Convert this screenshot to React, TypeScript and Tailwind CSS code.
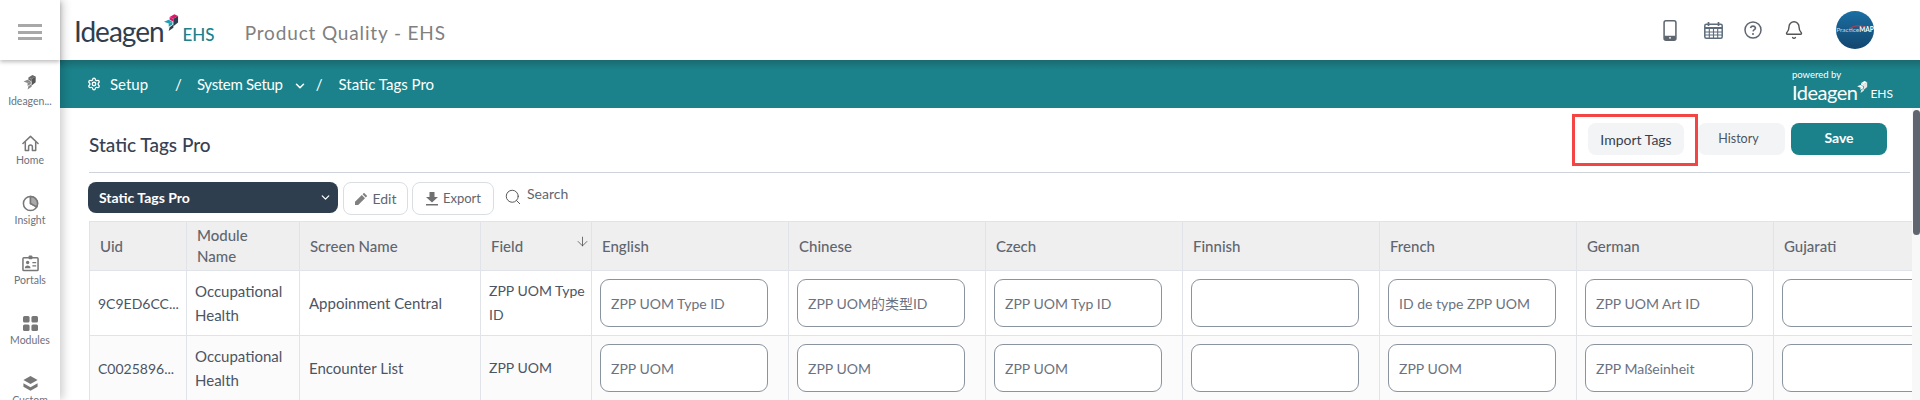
import React from "react";
import { ChevronDown, ArrowDown, Search, Settings, Bell } from "lucide-react";

const LANGS = ["English", "Chinese", "Czech", "Finnish", "French", "German", "Gujarati"];
const ROWS = [
  { uid: "9C9ED6CC...", mod: ["Occupational", "Health"], screen: "Appoinment Central", field: ["ZPP UOM Type", "ID"], vals: ["ZPP UOM Type ID", "ZPP UOM的类型ID", "ZPP UOM Typ ID", "", "ID de type ZPP UOM", "ZPP UOM Art ID", ""] },
  { uid: "C0025896...", mod: ["Occupational", "Health"], screen: "Encounter List", field: ["ZPP UOM"], vals: ["ZPP UOM", "ZPP UOM", "ZPP UOM", "", "ZPP UOM", "ZPP Maßeinheit", ""] },
];
const COLS = "grid grid-cols-[97px_113px_181px_111px_197px_197px_197px_197px_197px_197px_197px]";

function Mark({ a, b, c, d, className }: { a: string; b: string; c: string; d: string; className?: string }) {
  return (
    <svg viewBox="0 0 16 21" className={className}>
      <path d="M6 3l5-3 4 2-5 3z" fill={a} />
      <path d="M6 3l4 2v3L6 6z" fill={a} />
      <path d="M10 5l5-3v7l-5 4z" fill={c} />
      <path d="M0 8l5-2 4 2-4 2z" fill={b} />
      <path d="M5 10l4-2v3l-4 2.5z" fill={b} />
      <path d="M5 18l5-3.5V11L6 14z" fill={d} />
    </svg>
  );
}

const HomeIcon = () => (
  <svg viewBox="0 0 18 18" className="h-[17px] w-[17px]" fill="none" stroke="#777" strokeWidth="1.6" strokeLinejoin="round">
    <path d="M1 9l8-7.5L17 9" strokeLinecap="round" />
    <path d="M3.5 7.5V16.5h3.5v-4a2 2 0 014 0v4h3.5V7.5" />
  </svg>
);
const InsightIcon = () => (
  <svg viewBox="0 0 18 18" className="h-[17px] w-[17px]" fill="none" stroke="#777" strokeWidth="1.6">
    <circle cx="9" cy="9" r="7.5" />
    <path d="M9 1.5V9l6.5 3.5" />
    <path d="M9 1.5a7.5 7.5 0 016.5 11L9 9z" fill="#aaa" />
  </svg>
);
const PortalIcon = () => (
  <svg viewBox="0 0 18 18" className="h-[17px] w-[17px]">
    <rect x="1" y="3" width="16" height="13.5" rx="1" fill="none" stroke="#777" strokeWidth="1.6" />
    <rect x="7" y="0.5" width="4" height="4" rx="1" fill="#777" />
    <circle cx="6" cy="8" r="1.8" fill="#777" />
    <path d="M3 14a3 3 0 016 0z" fill="#777" />
    <path d="M11 8h4M11 11.5h4" stroke="#777" strokeWidth="1.4" />
  </svg>
);
const ModulesIcon = () => (
  <svg viewBox="0 0 16 16" className="h-[15px] w-[15px]" fill="#777">
    <rect x="0" y="0" width="7" height="7" rx="1.6" />
    <rect x="9" y="0" width="7" height="7" rx="1.6" />
    <rect x="0" y="9" width="7" height="7" rx="1.6" />
    <rect x="9" y="9" width="7" height="7" rx="1.6" />
  </svg>
);
const CustomIcon = () => (
  <svg viewBox="0 0 18 18" className="h-[17px] w-[17px]" fill="#777">
    <path d="M9 1l7.5 4.2L9 9.4 1.5 5.2z" />
    <path d="M1.5 8.8L9 13l7.5-4.2v3.6L9 16.8 1.5 12.4z" />
  </svg>
);
const NAV = [
  { label: "Home", Icon: HomeIcon },
  { label: "Insight", Icon: InsightIcon },
  { label: "Portals", Icon: PortalIcon },
  { label: "Modules", Icon: ModulesIcon },
  { label: "Custom", Icon: CustomIcon },
];

export default function App() {
  return (
    <div className="relative flex h-[400px] w-[1920px] overflow-hidden bg-white font-['Lato','Liberation_Sans',sans-serif] text-[#4b5563]">
      <aside className="z-20 flex w-[60px] shrink-0 flex-col items-center bg-white shadow-[3px_0_9px_rgba(0,0,0,0.2)]">
        <div className="flex h-[60px] w-full shrink-0 items-center justify-center pt-1 shadow-[0_2px_4px_rgba(0,0,0,0.25)]">
          <div className="flex w-6 flex-col gap-[3.5px]">
            <span className="h-[3px] bg-[#a8a8a8]" />
            <span className="h-[3px] bg-[#a8a8a8]" />
            <span className="h-[3px] bg-[#a8a8a8]" />
          </div>
        </div>
        <div className="flex h-[74px] w-full shrink-0 flex-col items-center pt-[15px]">
          <Mark a="#6a6a6a" b="#888" c="#555" d="#888" className="h-[17px] w-[14px]" />
          <span className="mt-[3px] text-[10.5px] leading-[12px] text-[#6b7280]">Ideagen...</span>
        </div>
        {NAV.map(({ label, Icon }) => (
          <div key={label} className="flex h-[60px] w-full shrink-0 flex-col items-center">
            <div className="flex h-[18px] items-center"><Icon /></div>
            <span className="mt-[2px] text-[10.5px] leading-[12px] text-[#6b7280]">{label}</span>
          </div>
        ))}
      </aside>

      <div className="flex min-w-0 flex-1 flex-col">
        <header className="flex h-[60px] shrink-0 items-center">
          <div className="ml-[14px] mt-[2px] flex items-center">
            <span className="text-[28px] leading-none tracking-[-1px] text-[#2f3e4e]">Ideagen</span>
            <Mark a="#e0186c" b="#1f9fb5" c="#2f3e4e" d="#2f3e4e" className="mb-[14px] h-[20px] w-[15px]" />
            <span className="ml-[4px] mt-[7px] text-[17px] font-medium leading-none text-[#1b828b]">EHS</span>
          </div>
          <span className="ml-[30px] mt-[6px] text-[19px] tracking-[0.85px] text-[#808080]">Product Quality - EHS</span>
          <div className="ml-auto flex items-center text-[#5f6670]">
            <svg viewBox="0 0 14 22" className="h-[21px] w-[14px]">
              <rect x="0.8" y="0.8" width="12.4" height="20.4" rx="2" fill="none" stroke="#5f6670" strokeWidth="1.6" />
              <path d="M1 16.5h12V19a2 2 0 01-2 2H3a2 2 0 01-2-2z" fill="#5f6670" />
              <circle cx="7" cy="18.7" r="1" fill="#fff" />
            </svg>
            <svg viewBox="0 0 19 17" className="ml-[27px] h-[17px] w-[19px]" fill="none" stroke="#5d6b7c">
              <rect x="0.8" y="2.2" width="17.4" height="14" rx="1.5" strokeWidth="1.5" />
              <path d="M4.5 0v4M14.5 0v4" strokeWidth="1.7" />
              <path d="M1 6h17" strokeWidth="2" />
              <path d="M1 10h17M1 13h17M5.3 6v10M9.5 6v10M13.7 6v10" strokeWidth="1.1" />
            </svg>
            <svg viewBox="0 0 18 18" className="ml-[21px] h-[18px] w-[18px]" fill="none" stroke="#5f6670">
              <circle cx="9" cy="9" r="8" strokeWidth="1.5" />
              <path d="M6.5 7a2.6 2.6 0 015 0c0 1.6-2.3 1.8-2.4 3.4" strokeWidth="1.6" />
              <circle cx="9" cy="13" r="1" fill="#5f6670" stroke="none" />
            </svg>
            <Bell size={20} strokeWidth={1.7} className="ml-[22px] text-[#555]" />
            <div className="relative ml-[32px] mr-[46px] flex h-[38px] w-[38px] items-center justify-center rounded-full bg-gradient-to-b from-[#1b6fa3] to-[#12466f] text-[6.5px] font-bold text-white">
              <span className="font-normal text-[#c9d6e2]">Practice</span>MAP
              <svg viewBox="0 0 20 5" className="absolute left-[13px] top-[14px] w-[18px]" fill="none" stroke="#d33a45" strokeWidth="1">
                <path d="M0 4C7 0 14 0 20 3" />
              </svg>
            </div>
          </div>
        </header>

        <nav className="flex h-[48px] shrink-0 items-center bg-gradient-to-b from-[#1a6a70] via-[#1b828b] via-20% to-[#1b828b] pl-[27px] pr-[27px] text-[15px] text-white">
          <Settings size={14} strokeWidth={2.2} />
          <span className="ml-[9px]">Setup</span>
          <span className="ml-[27px]">/</span>
          <span className="ml-[15px] tracking-[-0.3px]">System Setup</span>
          <ChevronDown size={14} strokeWidth={2.6} className="ml-[10px] mt-[3px]" />
          <span className="ml-[9px]">/</span>
          <span className="ml-[16px]">Static Tags Pro</span>
          <div className="ml-auto flex flex-col pt-[4px]">
            <span className="text-[9.5px] leading-[12px]">powered by</span>
            <div className="flex items-center">
              <span className="text-[20px] leading-[22px] tracking-[-0.5px]">Ideagen</span>
              <Mark a="#fff" b="#fff" c="#e5e5e5" d="#e5e5e5" className="mb-2 h-[14px] w-[11px]" />
              <span className="ml-[2px] mt-[3px] text-[12px] leading-none">EHS</span>
            </div>
          </div>
        </nav>

        <main className="min-h-0 flex-1 pl-[29px] pr-[10px]">
          <div className="flex h-[65px] items-center justify-between border-b border-[#cfd4da]">
            <h1 className="pt-[11px] text-[19px] font-medium text-[#374151]">Static Tags Pro</h1>
            <div className="mb-[2px] mr-[23px] flex items-center">
              <button className="h-8 w-24 rounded-lg bg-[#f3f4f6] text-[14px] text-[#374151]">Import Tags</button>
              <button className="ml-[14px] h-8 w-[87px] rounded-lg bg-[#f3f4f6] pr-[6px] text-[12.5px] text-[#4b5563]">History</button>
              <button className="ml-[6px] h-8 w-24 rounded-lg bg-[#1b828b] pb-1 text-[14px] font-bold text-white">Save</button>
            </div>
          </div>

          <div className="mt-[9px] flex h-[32px] items-start">
            <div className="ml-[-1px] flex h-[31px] w-[250px] items-center justify-between rounded-lg bg-[#2f3e4e] pl-[11px] pr-[6px] text-[14px] font-bold text-white">
              Static Tags Pro
              <ChevronDown size={13} strokeWidth={2.4} />
            </div>
            <button className="ml-[5px] flex h-[33px] w-[65px] items-center justify-center gap-[4px] rounded-lg border border-[#d9dee3] text-[14px] text-[#5f6670]">
              <svg viewBox="0 0 14 14" className="h-[14px] w-[14px]" fill="#808080">
                <path d="M10 .8l3.2 3.2-1.4 1.4-3.2-3.2zM7.8 3l3.2 3.2-6.8 6.8H1v-3.2z" />
              </svg>
              Edit
            </button>
            <button className="ml-[4px] flex h-[33px] w-[82px] items-center justify-center gap-[4px] rounded-lg border border-[#d9dee3] text-[13px] text-[#5f6670]">
              <svg viewBox="0 0 14 14" className="h-[14px] w-[14px]" fill="#707070">
                <path d="M4.5 0h5v5H13L7 10.5 1 5h3.5zM1 12h12v1.6H1z" />
              </svg>
              Export
            </button>
            <Search size={18} strokeWidth={1.3} className="ml-[10px] mt-[6px] text-[#555]" />
            <span className="ml-[5px] mt-[1px] text-[14px] text-[#5f6670]">Search</span>
          </div>

          <div className="mt-[7px] w-max border-t border-l border-[#e0e3e8]">
            <div className={`${COLS} h-[49px] bg-[#efefef] text-[15px] font-medium text-[#5f6670]`}>
              <div className="flex items-center border-r border-b border-[#e0e3e8] pl-[10px]">Uid</div>
              <div className="flex items-center border-r border-b border-[#e0e3e8] pl-[10px] leading-[21px]">Module<br />Name</div>
              <div className="flex items-center border-r border-b border-[#e0e3e8] pl-[10px]">Screen Name</div>
              <div className="relative flex items-center border-r border-b border-[#e0e3e8] pl-[10px]">
                Field
                <ArrowDown size={15} strokeWidth={1.2} className="absolute right-[1px] top-[12px] text-[#444]" />
              </div>
              {LANGS.map((l) => (
                <div key={l} className="flex items-center border-r border-b border-[#e0e3e8] pl-[10px]">{l}</div>
              ))}
            </div>
            {ROWS.map((r, i) => (
              <div key={r.uid} className={`${COLS} h-[65px] text-[15px] ${i ? "bg-[#fbfbfb]" : "bg-white"}`}>
                <div className="flex items-center border-r border-b border-[#e0e3e8] pl-[8px] text-[14px]">{r.uid}</div>
                <div className="flex flex-col justify-center border-r border-b border-[#e0e3e8] pl-[8px] leading-[24px]">
                  {r.mod.map((m) => <span key={m}>{m}</span>)}
                </div>
                <div className="flex items-center border-r border-b border-[#e0e3e8] pl-[9px]">{r.screen}</div>
                <div className="flex flex-col justify-center border-r border-b border-[#e0e3e8] pl-[8px] text-[14px] leading-[24px]">
                  {r.field.map((m) => <span key={m}>{m}</span>)}
                </div>
                {r.vals.map((v, j) => (
                  <div key={j} className="flex items-center border-r border-b border-[#e0e3e8] pl-[8px]">
                    <div className="flex h-[48px] w-[168px] items-center whitespace-nowrap rounded-[9px] border border-[#8a939e] bg-white pl-[10px] font-['Lato','Noto_Sans_CJK_SC',sans-serif] text-[14px] text-[#6b7280]">
                      {v}
                    </div>
                  </div>
                ))}
              </div>
            ))}
          </div>
        </main>
      </div>

      <div className="absolute left-[1572px] top-[114px] z-10 h-[52px] w-[126px] border-[3px] border-[#f44545]" />
      <div className="absolute right-0 top-[108px] z-10 h-[292px] w-2 bg-[#f8f8f8]">
        <div className="mx-auto mt-[2px] h-[125px] w-[7px] rounded-full bg-[#5f6670]" />
      </div>
    </div>
  );
}
